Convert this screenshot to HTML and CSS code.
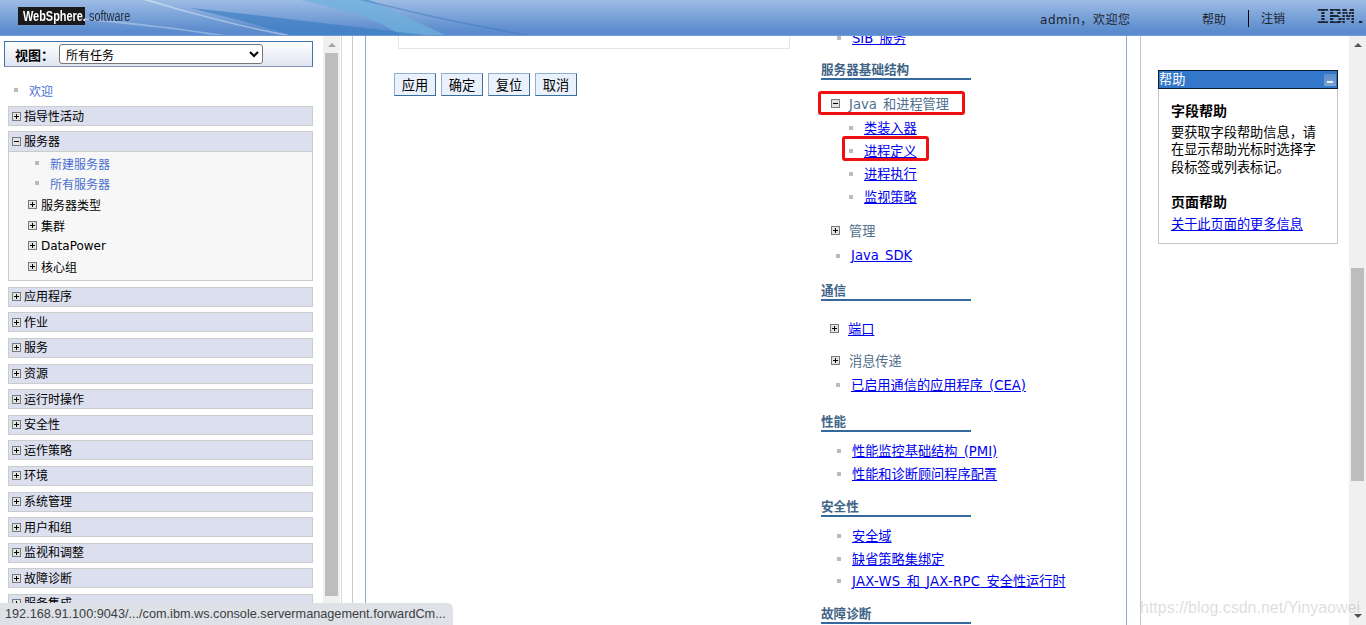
FILE: index.html
```html
<!DOCTYPE html>
<html lang="zh-CN">
<head>
<meta charset="utf-8">
<title>WebSphere Integrated Solutions Console</title>
<link rel="stylesheet" href="styles.css">
</head>
<body>
<svg class="defs" width="0" height="0" aria-hidden="true">
  <symbol id="plus" viewBox="0 0 9 9"><rect x=".5" y=".5" width="8" height="8" fill="#e6e4da" stroke="#6f7c88"/><path d="M2 4.5h5M4.5 2v5" stroke="#000" fill="none"/></symbol>
  <symbol id="minus" viewBox="0 0 9 9"><rect x=".5" y=".5" width="8" height="8" fill="#e6e4da" stroke="#6f7c88"/><path d="M2 4.5h5" stroke="#000" fill="none"/></symbol>
</svg>
<header class="top">
  <svg class="waves" viewBox="0 0 1366 35" preserveAspectRatio="none" aria-hidden="true">
    <path d="M300 0 L370 0 L445 35 L400 35 C380 20 340 8 300 0Z" fill="#6fb0dc" opacity=".75"/>
    <path d="M190 8 C250 14 340 25 425 35 L290 35 C260 25 220 15 190 8Z" fill="#3a7cc2" opacity=".65"/>
    <path d="M150 0 C190 12 240 26 290 35 L282 35 C235 26 185 12 143 0Z" fill="#fff" opacity=".4"/>
    <path d="M367 0 C420 14 480 26 530 35 L523 35 C470 26 415 14 360 0Z" fill="#3f76b8" opacity=".45"/>
    <path d="M83 18 C130 22 180 28 225 35 L212 35 C170 28 125 24 83 20Z" fill="#fff" opacity=".3"/>
  </svg>
  <div class="brand"><div class="brand-box"><span class="brand-in">WebSphere.</span></div><span class="brand-sw">software</span></div>
  <div class="user">admin，欢迎您</div>
  <nav class="top-links"><span class="top-help">帮助</span><span class="top-out">注销</span></nav>
  <div class="ibm">IBM.</div>
</header>
<div class="frames">
  <aside class="side">
    <div class="side-body">
      <div class="view"><label class="view-label">视图：</label><select class="view-select"><option>所有任务</option></select></div>
      <div class="welcome"><i class="dot"></i><a class="nav-link">欢迎</a></div>
      <div class="cat cat-first"><svg class="tg"><use href="#plus"/></svg>指导性活动</div>
      <div class="group">
        <div class="cat open"><svg class="tg"><use href="#minus"/></svg>服务器</div>
        <div class="g-link"><i class="dot"></i><a class="nav-link">新建服务器</a></div>
        <div class="g-link"><i class="dot"></i><a class="nav-link">所有服务器</a></div>
        <div class="g-sub g-first"><svg class="tg"><use href="#plus"/></svg>服务器类型</div>
        <div class="g-sub"><svg class="tg"><use href="#plus"/></svg>集群</div>
        <div class="g-sub"><svg class="tg"><use href="#plus"/></svg>DataPower</div>
        <div class="g-sub"><svg class="tg"><use href="#plus"/></svg>核心组</div>
      </div>
      <div class="cat"><svg class="tg"><use href="#plus"/></svg>应用程序</div>
      <div class="cat"><svg class="tg"><use href="#plus"/></svg>作业</div>
      <div class="cat"><svg class="tg"><use href="#plus"/></svg>服务</div>
      <div class="cat"><svg class="tg"><use href="#plus"/></svg>资源</div>
      <div class="cat"><svg class="tg"><use href="#plus"/></svg>运行时操作</div>
      <div class="cat"><svg class="tg"><use href="#plus"/></svg>安全性</div>
      <div class="cat"><svg class="tg"><use href="#plus"/></svg>运作策略</div>
      <div class="cat"><svg class="tg"><use href="#plus"/></svg>环境</div>
      <div class="cat"><svg class="tg"><use href="#plus"/></svg>系统管理</div>
      <div class="cat"><svg class="tg"><use href="#plus"/></svg>用户和组</div>
      <div class="cat"><svg class="tg"><use href="#plus"/></svg>监视和调整</div>
      <div class="cat"><svg class="tg"><use href="#plus"/></svg>故障诊断</div>
      <div class="cat"><svg class="tg"><use href="#plus"/></svg>服务集成</div>
    </div>
    <div class="sbar sbar-side"><i class="arrow up"></i><div class="thumb"></div></div>
  </aside>
  <div class="work">
    <main class="main">
      <section class="form">
        <div class="form-box"></div>
        <div class="buttons"><button class="btn">应用</button><button class="btn">确定</button><button class="btn">复位</button><button class="btn">取消</button></div>
      </section>
      <section class="tasks">
        <div class="row lv1 first"><i class="dot"></i><a class="lnk">SIB 服务</a></div>
        <h3 class="title m11">服务器基础结构</h3>
        <div class="row tree m13"><svg class="tg"><use href="#minus"/></svg><span class="tree-name">Java 和进程管理</span></div>
        <div class="row lv2"><i class="dot"></i><a class="lnk">类装入器</a></div>
        <div class="row lv2"><i class="dot"></i><a class="lnk">进程定义</a></div>
        <div class="row lv2"><i class="dot"></i><a class="lnk">进程执行</a></div>
        <div class="row lv2"><i class="dot"></i><a class="lnk">监视策略</a></div>
        <div class="row tree m12"><svg class="tg"><use href="#plus"/></svg><span class="tree-name">管理</span></div>
        <div class="row lv0 m1"><i class="dot"></i><a class="lnk">Java SDK</a></div>
        <h3 class="title m15">通信</h3>
        <div class="row tree tree-l m17"><svg class="tg"><use href="#plus"/></svg><a class="lnk">端口</a></div>
        <div class="row tree m9"><svg class="tg"><use href="#plus"/></svg><span class="tree-name">消息传递</span></div>
        <div class="row lv0"><i class="dot"></i><a class="lnk">已启用通信的应用程序 (CEA)</a></div>
        <h3 class="title m17">性能</h3>
        <div class="row lv1 m8"><i class="dot"></i><a class="lnk">性能监控基础结构 (PMI)</a></div>
        <div class="row lv1"><i class="dot"></i><a class="lnk">性能和诊断顾问程序配置</a></div>
        <h3 class="title m12">安全性</h3>
        <div class="row lv1 m8"><i class="dot"></i><a class="lnk">安全域</a></div>
        <div class="row lv1"><i class="dot"></i><a class="lnk">缺省策略集绑定</a></div>
        <div class="row lv1 row-tight"><i class="dot"></i><a class="lnk"><span class="lat">JAX-WS</span> 和 <span class="lat">JAX-RPC</span> 安全性运行时</a></div>
        <h3 class="title m12">故障诊断</h3>
      </section>
    </main>
    <div class="help-pane">
      <div class="help">
        <div class="help-bar"><span>帮助</span><i class="help-min"></i></div>
        <div class="help-body">
          <h4 class="help-h">字段帮助</h4>
          <p class="help-p">要获取字段帮助信息，请在显示帮助光标时选择字段标签或列表标记。</p>
          <h4 class="help-h help-h2">页面帮助</h4>
          <a class="lnk help-link">关于此页面的更多信息</a>
        </div>
      </div>
    </div>
    <div class="sbar sbar-main"><i class="arrow up"></i><div class="thumb"></div><i class="arrow down"></i></div>
  </div>
</div>
<div class="mark mark-1"></div>
<div class="mark mark-2"></div>
<div class="status">192.168.91.100:9043/.../com.ibm.ws.console.servermanagement.forwardCm...</div>
<div class="watermark">https://blog.csdn.net/Yinyaowei</div>
</body>
</html>
```
FILE: styles.css
```css
* { box-sizing: border-box; }
html, body { margin: 0; height: 625px; overflow: hidden; background: #fff; }
body { font-family: "DejaVu Sans", "Noto Sans CJK SC", sans-serif; font-size: 12px; color: #000; display: flex; flex-direction: column; position: relative; }
.defs { position: absolute; }
i { display: block; }

/* header */
.top { height: 36px; flex: none; display: flex; align-items: center; position: relative; overflow: hidden; background: linear-gradient(#9dbce4, #5a8bcd 90%, #5c8dd0); border-bottom: 1px solid #6d9ad6; }
.waves { position: absolute; inset: 0; width: 100%; height: 100%; }
.brand { margin-left: 18px; display: flex; align-items: center; position: relative; margin-top: -3px; width: 120px; }
.brand-box { background: #1a1a1a; color: #fff; font: bold 14px/18px "Liberation Sans", sans-serif; padding-left: 5px; width: 67px; height: 18px; white-space: nowrap; flex: none; }
.brand-in { display: inline-block; transform: scaleX(.78); transform-origin: left center; }
.brand-sw { color: #26303f; font: 14px "Liberation Sans", sans-serif; margin-left: 4px; display: inline-block; transform: scaleX(.78); transform-origin: left center; }
.user { position: relative; margin-left: 902px; width: 91px; font-size: 12px; white-space: nowrap; color: #1c2430; letter-spacing: .55px; margin-top: 1px; }
.top-links { position: relative; display: flex; align-items: center; margin-left: 71px; font-size: 12px; color: #1c2430; margin-top: 2px; }
.top-help { width: 46px; }
.top-out { border-left: 1px solid #000; padding-left: 12px; height: 17px; line-height: 18px; width: 68px; }
.ibm { position: relative; font: bold 23px/18px "Liberation Mono", monospace; letter-spacing: -1.2px; width: 49px; white-space: nowrap; background: repeating-linear-gradient(#1b2536 0 2px, transparent 2px 3px); -webkit-background-clip: text; background-clip: text; color: transparent; }

.frames { flex: 1; min-height: 0; display: flex; }

/* left frame */
.side { width: 342px; flex: none; display: flex; border-right: 1px solid #d9d9d9; overflow: hidden; }
.side-body { width: 323px; flex: none; padding: 5px 10px 0 8px; }
.view { height: 26px; margin: 0 0 0 -4px; display: flex; align-items: center; border: 1px solid #3f74ad; border-bottom-color: #7f93b5; background: linear-gradient(#fff, #dfe4f2); }
.view-label { font-size: 13px; font-weight: bold; margin-left: 10px; width: 44px; white-space: nowrap; }
.view-select { width: 204px; height: 20px; font: 12px "Noto Sans CJK SC", sans-serif; padding: 0 0 2px 2px; background: #fff; border: 1px solid #767676; border-radius: 3px; color: #000; }
.welcome { display: flex; align-items: center; height: 20px; margin-top: 13px; padding-left: 6px; margin-bottom: 6px; }
.welcome .dot { margin-right: 11px; }
.dot { width: 4px; height: 4px; background: #bbb; flex: none; }
.nav-link { color: #4a6fd0; }
.cat { height: 20px; margin-bottom: 5.6px; background: #dcdfee; border: 1px solid #ccc; display: flex; align-items: center; white-space: nowrap; padding-bottom: 2px; }
.cat-first { margin-bottom: 5px; }
.tg { width: 9px; height: 9px; flex: none; }
.cat .tg { margin: 2px 3px 0 3px; }
.group { border: 1px solid #ccc; background: #f7f7f7; height: 150px; margin-bottom: 5.8px; }
.cat.open { margin: -1px -1px 1.4px; height: 21px; padding-bottom: 2px; }
.g-link { display: flex; align-items: center; height: 20px; padding-left: 26px; }
.g-link .dot { margin-right: 11px; }
.g-sub { display: flex; align-items: center; height: 20.6px; padding-left: 19px; white-space: nowrap; }
.g-sub .tg { margin-right: 4px; }
.g-first { margin-top: 1px; }

/* scrollbars */
.sbar { width: 17px; flex: none; background: #f0f0f0; display: flex; flex-direction: column; align-items: center; }
.arrow { width: 0; height: 0; border-left: 4px solid transparent; border-right: 4px solid transparent; flex: none; }
.arrow.up { border-bottom: 4px solid #555; margin-top: 7px; }
.arrow.down { border-top: 4px solid #505050; margin-top: auto; margin-bottom: 7px; }
.thumb { width: 13px; background: #bdbdbd; flex: none; }
.sbar-side .arrow.up { border-bottom-color: #a3a3a3; }
.sbar-side .thumb { height: 543px; margin-top: 6px; }
.sbar-main .thumb { height: 213px; margin-top: 221px; }

/* center frame */
.work { flex: 1; min-width: 0; display: flex; padding-left: 10px; }
.main { width: 776px; flex: none; margin-left: 0; border-left: 1px solid #c8c8c8; padding-left: 12px; display: flex; overflow: hidden; position: relative; }
.form { width: 456px; flex: none; border-left: 1px solid #93a9d3; }
.form-box { margin-left: 32px; width: 392px; height: 13px; border: 1px solid #e5e5e5; border-top: 0; }
.buttons { display: flex; gap: 5px; margin: 24px 0 0 28px; }
.btn { width: 42px; height: 23px; padding: 0; background: #e9f1fc; border: 1px solid; border-color: #8fb0d0 #3b6f9f #3b6f9f #8fb0d0; font: 13.2px "Noto Sans CJK SC", sans-serif; color: #000; }
.tasks { width: 306px; flex: none; margin-top: -9px; border-right: 1px solid #93a9d3; font-size: 13.2px; word-spacing: 2px; }
.lat { letter-spacing: .3px; }
.row { height: 23px; display: flex; align-items: center; white-space: nowrap; }
.row-tight { margin-top: -1px; }
.title { width: 150px; height: 19px; margin: 0; font-size: 12.6px; font-weight: bold; line-height: 17px; color: #3f6487; border-bottom: 2px solid #35689c; white-space: nowrap; }
.lnk { color: #0000f0; text-decoration: underline; }
.tree-name { color: #51708d; }
.lv0 { padding-left: 15px; }
.lv0 .dot { margin-right: 11px; }
.lv1 { padding: 0 0 2px 16px; }
.lv1 .dot { margin-right: 11px; }
.lv2 { padding-left: 28px; }
.lv2 .dot { margin-right: 11px; }
.tree { padding: 0 0 2px 10px; }
.tree .tg { margin-right: 9px; }
.tree-l { padding-left: 9px; }
.m1 { margin-top: 1px; } .m8 { margin-top: 8px; } .m9 { margin-top: 9px; } .m11 { margin-top: 11px; } .m12 { margin-top: 12px; } .m13 { margin-top: 13px; } .m15 { margin-top: 15px; } .m17 { margin-top: 17px; }

/* help */
.help-pane { flex: 1; min-width: 0; margin-left: 12px; border-left: 1px solid #c8c8c8; padding: 34px 11px 0 17px; }
.help { width: 180px; }
.help-bar { height: 19px; background: #3277c9; border: 1px solid #0b1b30; color: #fff; font-size: 13.2px; line-height: 19px; display: flex; justify-content: space-between; align-items: center; }
.help-min { width: 12px; height: 12px; margin-right: 1px; background: linear-gradient(#5a8ccb, #7ba3d4); position: relative; }
.help-min::after { content: ""; position: absolute; left: 3px; right: 3px; bottom: 3px; height: 2px; background: #e8eef8; }
.help-body { height: 155px; border: 1px solid #c8c8c8; border-top: 0; padding: 12px 12px 0; font-size: 13.2px; }
.help-h { margin: 0; font-size: 14px; font-weight: bold; line-height: 20px; }
.help-p { margin: 3px 0 0; line-height: 17.3px; }
.help-h2 { margin-top: 16px; }
.help-link { display: block; margin-top: 4px; line-height: 18px; }

/* overlays */
.mark { position: absolute; border: 3px solid #f01010; border-radius: 3px; }
.mark-1 { left: 818px; top: 91px; width: 147px; height: 24px; }
.mark-2 { left: 842px; top: 136px; width: 87px; height: 25px; }
.status { position: absolute; left: 0; bottom: 0; width: 453px; height: 22px; background: #dee1e6; border-top-right-radius: 6px; color: #3c4043; font: 12.7px/23px "Liberation Sans", sans-serif; padding-left: 5px; white-space: nowrap; overflow: hidden; }
.watermark { position: absolute; left: 1140px; top: 598px; font: 16px/20px "Liberation Sans", sans-serif; color: rgba(120,120,120,.26); white-space: nowrap; }
```
